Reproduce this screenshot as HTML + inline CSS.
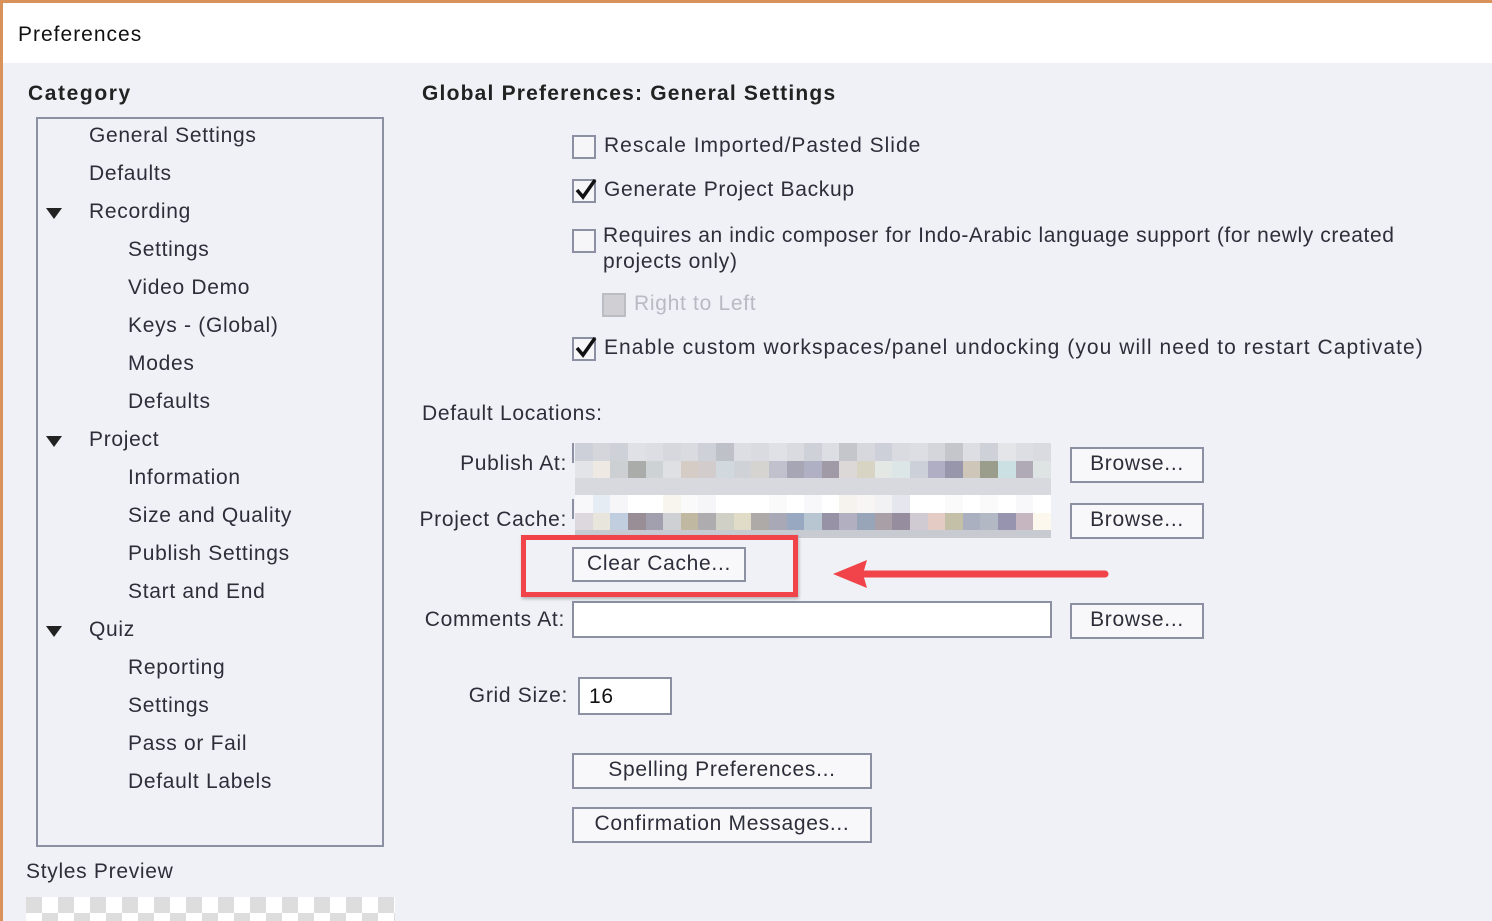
<!DOCTYPE html>
<html><head><meta charset="utf-8"><style>
*{margin:0;padding:0;box-sizing:border-box}
body{width:1492px;height:921px;overflow:hidden;background:#eff1f6;font-family:"Liberation Sans",sans-serif;color:#2e2e3a;position:relative;font-size:21px;letter-spacing:0.7px}
.t{position:absolute;white-space:nowrap;line-height:24px;margin-top:1px}
.r{text-align:right}
.b{font-weight:bold;color:#222;letter-spacing:1.2px}
.btn{position:absolute;background:#f8f8fa;border:2px solid #8b90a3;text-align:center;line-height:30px;font-size:21px;color:#2e2e3a}
.cb{position:absolute;width:24px;height:24px;border:2px solid #8b90a3;background:#f6f6f8}
.row{position:absolute;display:flex}
.row div{flex:1}
.tri{position:absolute;width:0;height:0;border-left:8px solid transparent;border-right:8px solid transparent;border-top:11px solid #222}
</style></head><body>
<div style="position:absolute;left:0;top:0;width:1492px;height:3px;background:#d9925a"></div>
<div style="position:absolute;left:0;top:0;width:3px;height:921px;background:#d9925a"></div>
<div style="position:absolute;left:3px;top:3px;width:1489px;height:60px;background:#fff"></div>
<div class="t" style="left:18px;top:22px;color:#111;letter-spacing:1px">Preferences</div>

<div class="t b" style="left:28px;top:81px;letter-spacing:1.6px">Category</div>
<div style="position:absolute;left:36px;top:117px;width:348px;height:730px;border:2px solid #8b90a3"></div>
<div class="t" style="left:89px;top:123px">General Settings</div>
<div class="t" style="left:89px;top:161px">Defaults</div>
<div class="tri" style="left:46px;top:208px"></div>
<div class="t" style="left:89px;top:199px">Recording</div>
<div class="t" style="left:128px;top:237px">Settings</div>
<div class="t" style="left:128px;top:275px">Video Demo</div>
<div class="t" style="left:128px;top:313px">Keys - (Global)</div>
<div class="t" style="left:128px;top:351px">Modes</div>
<div class="t" style="left:128px;top:389px">Defaults</div>
<div class="tri" style="left:46px;top:436px"></div>
<div class="t" style="left:89px;top:427px">Project</div>
<div class="t" style="left:128px;top:465px">Information</div>
<div class="t" style="left:128px;top:503px">Size and Quality</div>
<div class="t" style="left:128px;top:541px">Publish Settings</div>
<div class="t" style="left:128px;top:579px">Start and End</div>
<div class="tri" style="left:46px;top:626px"></div>
<div class="t" style="left:89px;top:617px">Quiz</div>
<div class="t" style="left:128px;top:655px">Reporting</div>
<div class="t" style="left:128px;top:693px">Settings</div>
<div class="t" style="left:128px;top:731px">Pass or Fail</div>
<div class="t" style="left:128px;top:769px">Default Labels</div>
<div class="t" style="left:26px;top:859px">Styles Preview</div>
<div style="position:absolute;left:26px;top:897px;width:369px;height:24px;background-color:#fff;background-image:linear-gradient(45deg,#ddd 25%,transparent 25%,transparent 75%,#ddd 75%),linear-gradient(45deg,#ddd 25%,transparent 25%,transparent 75%,#ddd 75%);background-size:32px 32px;background-position:16px 0,0 16px"></div>

<div class="t b" style="left:422px;top:81px">Global Preferences: General Settings</div>
<div class="cb" style="left:572px;top:135px"></div>
<div class="t" style="left:604px;top:133px;letter-spacing:1px">Rescale Imported/Pasted Slide</div>
<div class="cb" style="left:572px;top:179px"></div>
<svg style="position:absolute;left:574px;top:178px" width="24" height="24"><path d="M3 12 L9 19 L21 2" stroke="#111" stroke-width="3.5" fill="none"/></svg>
<div class="t" style="left:604px;top:177px">Generate Project Backup</div>
<div class="cb" style="left:572px;top:229px"></div>
<div class="t" style="left:603px;top:223px;letter-spacing:0.6px">Requires an indic composer for Indo-Arabic language support (for newly created</div>
<div class="t" style="left:603px;top:249px">projects only)</div>
<div class="cb" style="left:602px;top:293px;background:#d0d0d4;border-color:#bcbcc4"></div>
<div class="t" style="left:634px;top:291px;color:#b8bac4">Right to Left</div>
<div class="cb" style="left:572px;top:337px"></div>
<svg style="position:absolute;left:574px;top:336px" width="24" height="24"><path d="M3 12 L9 19 L21 2" stroke="#111" stroke-width="3.5" fill="none"/></svg>
<div class="t" style="left:604px;top:335px;letter-spacing:1.05px">Enable custom workspaces/panel undocking (you will need to restart Captivate)</div>

<div class="t" style="left:422px;top:401px">Default Locations:</div>
<div class="t r" style="right:925px;top:451px">Publish At:</div>
<div class="t r" style="right:925px;top:507px">Project Cache:</div>
<div class="t r" style="right:927px;top:607px">Comments At:</div>
<div class="t r" style="right:924px;top:683px">Grid Size:</div>

<div class="row" style="left:575px;top:443px;width:476px;height:18px"><div style="background:#cdd0d8"></div><div style="background:#d4d6dc"></div><div style="background:#cfd1d8"></div><div style="background:#dfe1e6"></div><div style="background:#dcdee4"></div><div style="background:#d6d8de"></div><div style="background:#d9dbe0"></div><div style="background:#cfd1d8"></div><div style="background:#bfc1c9"></div><div style="background:#dcdee4"></div><div style="background:#d9dbe0"></div><div style="background:#dfe1e6"></div><div style="background:#d9dbe0"></div><div style="background:#cfd1d8"></div><div style="background:#dcdee4"></div><div style="background:#c4c6cc"></div><div style="background:#d6d8de"></div><div style="background:#cdd0d8"></div><div style="background:#d9dbe0"></div><div style="background:#dcdee4"></div><div style="background:#d4d6dc"></div><div style="background:#c4c6cc"></div><div style="background:#dcdee4"></div><div style="background:#cfd1d8"></div><div style="background:#e3e5e9"></div><div style="background:#dcdee4"></div><div style="background:#d9dbe0"></div></div>
<div class="row" style="left:575px;top:461px;width:476px;height:17px"><div style="background:#e3e4e8"></div><div style="background:#eee9e2"></div><div style="background:#ccd0d2"></div><div style="background:#a9aca8"></div><div style="background:#cdd3d5"></div><div style="background:#dee0e4"></div><div style="background:#d6ccc6"></div><div style="background:#d2cccc"></div><div style="background:#d2d9de"></div><div style="background:#cfd2d6"></div><div style="background:#d6d4d0"></div><div style="background:#c0c1cc"></div><div style="background:#a6a6b4"></div><div style="background:#b0b0c4"></div><div style="background:#a09aa6"></div><div style="background:#ddd8d8"></div><div style="background:#d8d4c4"></div><div style="background:#e4e8e4"></div><div style="background:#dce6e6"></div><div style="background:#ccd0d8"></div><div style="background:#b0aec4"></div><div style="background:#9896aa"></div><div style="background:#cec6b8"></div><div style="background:#9a9c8c"></div><div style="background:#cae0e2"></div><div style="background:#b0aab6"></div><div style="background:#dee4e4"></div></div>
<div style="position:absolute;left:575px;top:478px;width:476px;height:17px;background:#d8d9de"></div>
<div style="position:absolute;left:572px;top:443px;width:2px;height:20px;background:#8b90a3"></div>
<div class="row" style="left:575px;top:495px;width:476px;height:18px"><div style="background:#f8f8fa"></div><div style="background:#e6ecf4"></div><div style="background:#f6f6f8"></div><div style="background:#fff"></div><div style="background:#fff"></div><div style="background:#f8f4ee"></div><div style="background:#fafafa"></div><div style="background:#f6f6f8"></div><div style="background:#fff"></div><div style="background:#fff"></div><div style="background:#fff"></div><div style="background:#fafafa"></div><div style="background:#fff"></div><div style="background:#f8f8fa"></div><div style="background:#fff"></div><div style="background:#f6f2ee"></div><div style="background:#f8f6f4"></div><div style="background:#f2f2f4"></div><div style="background:#e6e6ee"></div><div style="background:#fff"></div><div style="background:#fff"></div><div style="background:#fafafa"></div><div style="background:#fff"></div><div style="background:#fafafa"></div><div style="background:#fff"></div><div style="background:#f8f8fa"></div><div style="background:#fff"></div></div>
<div class="row" style="left:575px;top:513px;width:476px;height:17px"><div style="background:#dcd8de"></div><div style="background:#e8e6dc"></div><div style="background:#c0cee0"></div><div style="background:#9a8e96"></div><div style="background:#a2a0ae"></div><div style="background:#cfd0d4"></div><div style="background:#c0b8a0"></div><div style="background:#aeacae"></div><div style="background:#d0d0c6"></div><div style="background:#e0dcc8"></div><div style="background:#aeaaa8"></div><div style="background:#a8a8b6"></div><div style="background:#98a8c0"></div><div style="background:#b8c6d2"></div><div style="background:#9892a6"></div><div style="background:#b2b0c0"></div><div style="background:#98a4b8"></div><div style="background:#a8a0a6"></div><div style="background:#968e9e"></div><div style="background:#d0cad2"></div><div style="background:#e4ccc4"></div><div style="background:#c4c0a8"></div><div style="background:#aab0c0"></div><div style="background:#b2b8c4"></div><div style="background:#9694ae"></div><div style="background:#c6b6c0"></div><div style="background:#fcf8ee"></div></div>
<div style="position:absolute;left:575px;top:530px;width:476px;height:8px;background:#c8cad2"></div>
<div style="position:absolute;left:572px;top:499px;width:2px;height:20px;background:#8b90a3"></div>

<div style="position:absolute;left:572px;top:601px;width:480px;height:37px;border:2px solid #8b90a3;background:#fff"></div>
<div style="position:absolute;left:578px;top:677px;width:94px;height:38px;border:2px solid #8b90a3;background:#fff"></div>
<div class="t" style="left:589px;top:684px;color:#111">16</div>

<div class="btn" style="left:1070px;top:447px;width:134px;height:36px">Browse...</div>
<div class="btn" style="left:1070px;top:503px;width:134px;height:36px">Browse...</div>
<div class="btn" style="left:1070px;top:603px;width:134px;height:36px">Browse...</div>
<div class="btn" style="left:572px;top:547px;width:174px;height:35px">Clear Cache...</div>
<div class="btn" style="left:572px;top:753px;width:300px;height:36px">Spelling Preferences...</div>
<div class="btn" style="left:572px;top:807px;width:300px;height:36px">Confirmation Messages...</div>

<div style="position:absolute;left:521px;top:535px;width:277px;height:62px;border:5px solid #f0444a;box-shadow:1px 2px 3px rgba(0,0,0,.25)"></div>
<svg style="position:absolute;left:825px;top:555px" width="290" height="40"><path d="M280 19 L40 19" stroke="#f0444a" stroke-width="7" stroke-linecap="round"/><path d="M8 19 L42 5 L38 19 L42 33 Z" fill="#f0444a"/></svg>
</body></html>
